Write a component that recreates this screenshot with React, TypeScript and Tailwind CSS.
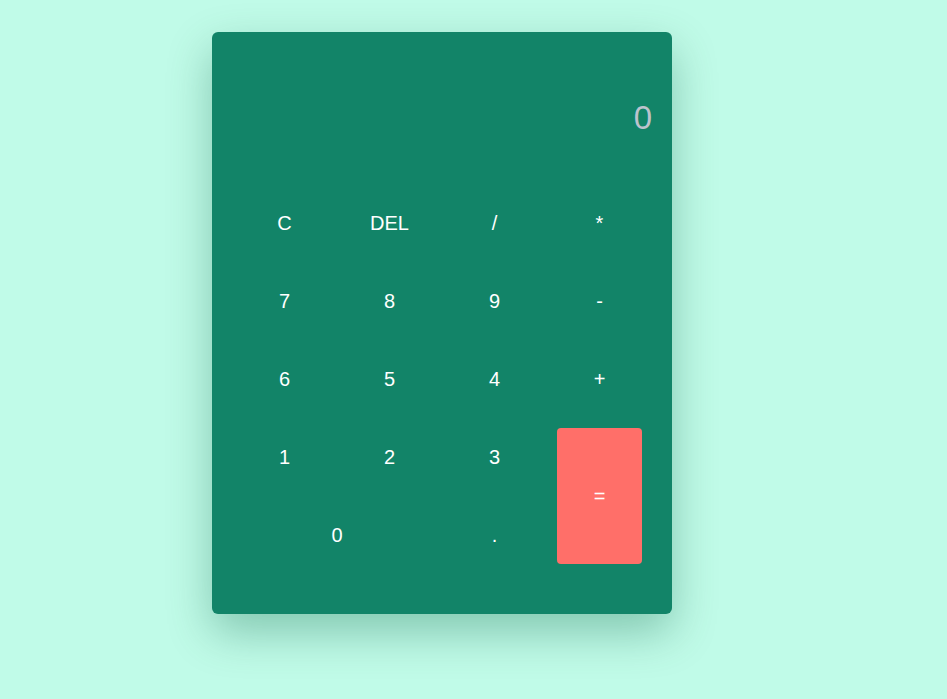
import React, { useState } from "react";

type Key = {
  label: string;
  className?: string;
};

const keys: Key[] = [
  { label: "C" },
  { label: "DEL" },
  { label: "/" },
  { label: "*" },
  { label: "7" },
  { label: "8" },
  { label: "9" },
  { label: "-" },
  { label: "6" },
  { label: "5" },
  { label: "4" },
  { label: "+" },
  { label: "1" },
  { label: "2" },
  { label: "3" },
  { label: "=", className: "row-span-2 bg-[#ff6f69] rounded-[4px]" },
  { label: "0", className: "col-span-2" },
  { label: "." },
];

const App = () => {
  const [display] = useState("0");

  return (
    <div
      className="min-h-[699px] w-full bg-[#c0fbe8] pt-[32px]"
      style={{ fontFamily: '"Liberation Sans", Arial, sans-serif' }}
    >
      <div className="ml-[212px] w-[460px] rounded-[6px] bg-[#128468] pt-[67px] pb-[50px] shadow-[0_18px_45px_rgba(0,90,60,0.32)]">
        <div className="flex h-[38px] items-center justify-end px-5 text-[33px] leading-[38px] text-[#bcc3cd]">
          {display}
        </div>
        <div className="mt-[57px] grid grid-cols-4 auto-rows-[58px] gap-5 px-[30px]">
          {keys.map((key, index) => (
            <button
              key={index}
              className={`flex items-center justify-center text-[20px] text-white ${
                key.className ?? ""
              }`}
            >
              {key.label}
            </button>
          ))}
        </div>
      </div>
    </div>
  );
};

export default App;
